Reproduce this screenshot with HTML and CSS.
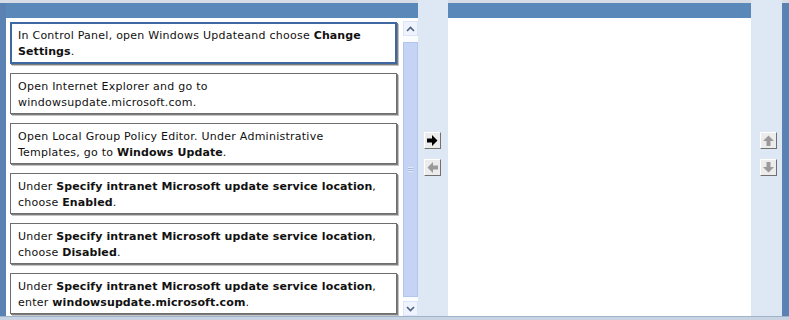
FILE: index.html
```html
<!DOCTYPE html>
<html lang="en">
<head>
    <meta charset="UTF-8">
    <title>Drag and drop - build list</title>
    <link rel="stylesheet" href="styles.css">
</head>
<body>
    <div class="frame">
        <div class="edge"></div>

        <div class="panel panel-source">
            <div class="panel-bar"></div>
            <div class="panel-body">
                <div class="answers">
                    <div class="answer selected">In Control Panel, open Windows Updateand choose <b>Change Settings</b>.</div>
                    <div class="answer">Open Internet Explorer and go to windowsupdate.microsoft.com.</div>
                    <div class="answer">Open Local Group Policy Editor. Under Administrative Templates, go to <b>Windows Update</b>.</div>
                    <div class="answer">Under <b>Specify intranet Microsoft update service location</b>, choose <b>Enabled</b>.</div>
                    <div class="answer">Under <b>Specify intranet Microsoft update service location</b>, choose <b>Disabled</b>.</div>
                    <div class="answer">Under <b>Specify intranet Microsoft update service location</b>, enter <b>windowsupdate.microsoft.com</b>.</div>
                </div>
                <div class="scrollbar">
                    <div class="scroll-btn">
                        <svg width="9" height="6" viewBox="0 0 9 6"><path d="M1 5 L4.5 1.5 L8 5" fill="none" stroke="#4d6185" stroke-width="1.6"/></svg>
                    </div>
                    <div class="scroll-track">
                        <div class="scroll-thumb"><span class="grip"></span></div>
                    </div>
                    <div class="scroll-btn">
                        <svg width="9" height="6" viewBox="0 0 9 6"><path d="M1 1 L4.5 4.5 L8 1" fill="none" stroke="#4d6185" stroke-width="1.6"/></svg>
                    </div>
                </div>
            </div>
        </div>

        <div class="gutter">
            <div class="tool-btn">
                <svg width="11" height="11" viewBox="0 0 11 11"><path d="M0 3.5 H5 V0 L10.5 5.5 L5 11 V7.5 H0 Z" fill="#000"/></svg>
            </div>
            <div class="tool-btn">
                <svg width="11" height="11" viewBox="0 0 11 11"><path d="M11 3.5 H6 V0 L0.5 5.5 L6 11 V7.5 H11 Z" fill="#9a9a9a"/></svg>
            </div>
        </div>

        <div class="panel panel-target">
            <div class="panel-bar"></div>
            <div class="panel-body"></div>
        </div>

        <div class="gutter gutter-right">
            <div class="tool-btn">
                <svg width="11" height="11" viewBox="0 0 11 11"><path d="M3.5 11 V6 H0 L5.5 0.5 L11 6 H7.5 V11 Z" fill="#9a9a9a"/></svg>
            </div>
            <div class="tool-btn">
                <svg width="11" height="11" viewBox="0 0 11 11"><path d="M3.5 0 V5 H0 L5.5 10.5 L11 5 H7.5 V0 Z" fill="#9a9a9a"/></svg>
            </div>
        </div>

        <div class="edge edge-right"></div>
    </div>
    <div class="footer-line"></div>
</body>
</html>
```

FILE: styles.css
```css
body {
    margin: 0;
    width: 789px;
    height: 320px;
    overflow: hidden;
    background: #d7dde6;
    font-family: "DejaVu Sans", Verdana, sans-serif;
}
.frame {
    display: flex;
    height: 316px;
}
.edge {
    width: 6px;
    margin-top: 3px;
    background: #5a83b3;
}
.edge-right {
    width: 7px;
}
.panel {
    display: flex;
    flex-direction: column;
}
.panel-source {
    width: 412px;
}
.panel-target {
    width: 303px;
}
.panel-bar {
    height: 15px;
    border-top: 3px solid #d7dde6;
    background: #5a88b8;
}
.panel-body {
    flex: 1;
    display: flex;
    background: #fff;
}
.answers {
    flex: 1;
    display: flex;
    flex-direction: column;
    gap: 9px;
    padding: 4px 6px 0 4px;
}
.answer {
    height: 34px;
    padding: 5px 16px 0 7px;
    border: 1px solid #6e6e6e;
    box-shadow: 1px 1px 0 #7c7c7c, 2px 2px 0 #c4c4c4;
    font-size: 11px;
    line-height: 16px;
    letter-spacing: 0.25px;
    color: #111;
    background: #fff;
}
.answer b {
    font-weight: bold;
    letter-spacing: 0.1px;
}
.answer.selected {
    border: 2px solid #3f68a3;
    padding: 4px 15px 0 6px;
}
.scrollbar {
    width: 15px;
    display: flex;
    flex-direction: column;
    padding: 3px 0 0;
}
.scroll-btn {
    height: 15px;
    display: flex;
    align-items: center;
    justify-content: center;
    background: #eef3fd;
    border: 1px solid #dbe5f7;
    box-sizing: border-box;
}
.scroll-track {
    flex: 1;
    padding: 6px 0 4px;
    background: #fbfcfe;
}
.scroll-thumb {
    height: 100%;
    display: flex;
    align-items: center;
    justify-content: center;
    background: #c5d4f5;
    border: 1px solid #b3c5ec;
    box-sizing: border-box;
}
.grip {
    width: 5px;
    height: 5px;
    background: repeating-linear-gradient(#e3eafb 0 1px, #a8b9e0 1px 2px);
}
.gutter {
    width: 30px;
    display: flex;
    flex-direction: column;
    align-items: center;
    justify-content: center;
    gap: 10px;
    padding: 0 2px 8px 0;
    box-sizing: border-box;
    background: #dde8f4;
}
.gutter-right {
    width: 31px;
    padding: 0 0 8px 4px;
}
.tool-btn {
    width: 17px;
    height: 17px;
    display: flex;
    align-items: center;
    justify-content: center;
    background: #ececec;
    border-top: 1px solid #fff;
    border-left: 1px solid #fff;
    border-right: 1px solid #707070;
    border-bottom: 1px solid #707070;
    box-sizing: border-box;
}
.footer-line {
    height: 4px;
    background: linear-gradient(#9fb3cc 0 1px, #c9d4e2 1px);
}
```
